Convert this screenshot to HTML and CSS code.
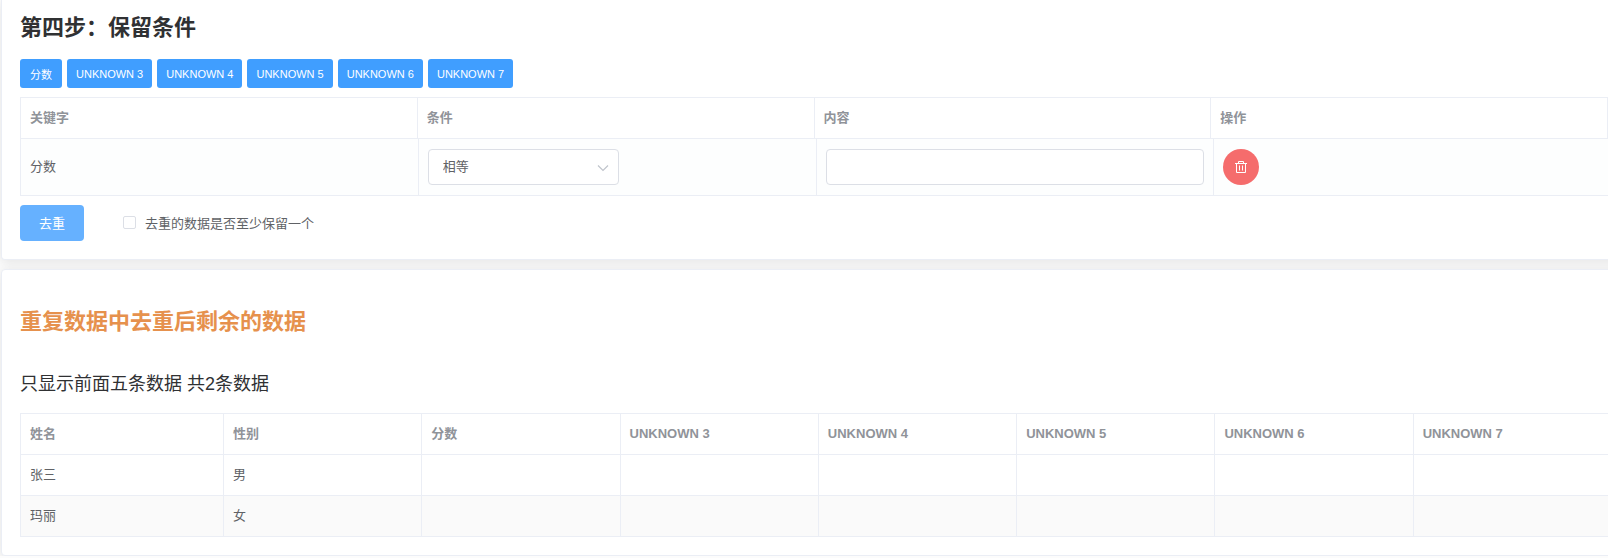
FILE: index.html
```html
<!DOCTYPE html>
<html lang="zh-CN">
<head>
  <meta charset="UTF-8">
  <meta name="viewport" content="width=device-width, initial-scale=1.0">
  <title>数据去重</title>
  <link rel="stylesheet" href="styles.css">
</head>
<body>
  <div class="page">
    <section class="card step-card">
      <h2>第四步：保留条件</h2>
      <div class="fields">
        <button type="button" class="btn-mini">分数</button>
        <button type="button" class="btn-mini">UNKNOWN 3</button>
        <button type="button" class="btn-mini">UNKNOWN 4</button>
        <button type="button" class="btn-mini">UNKNOWN 5</button>
        <button type="button" class="btn-mini">UNKNOWN 6</button>
        <button type="button" class="btn-mini">UNKNOWN 7</button>
      </div>

      <div class="table-wrap">
        <table class="table-head">
          <thead>
            <tr>
              <th>关键字</th>
              <th>条件</th>
              <th>内容</th>
              <th>操作</th>
            </tr>
          </thead>
        </table>
        <table class="table-body">
          <tbody>
            <tr>
              <td>分数</td>
              <td>
                <div class="select">
                  <select id="condition" aria-label="条件">
                    <option>相等</option>
                    <option>不相等</option>
                    <option>包含</option>
                  </select>
                  <svg class="arrow" viewBox="0 0 12 8" width="12" height="8">
                    <path d="M1 1.5 L6 6.5 L11 1.5" fill="none" stroke="#c0c4cc" stroke-width="1.2"/>
                  </svg>
                </div>
              </td>
              <td><input type="text" id="content" class="text-input" aria-label="内容"></td>
              <td>
                <button type="button" class="btn-delete" aria-label="删除">
                  <svg viewBox="0 0 14 14" width="14" height="14" fill="none" stroke="#fff">
                    <path d="M1 3.5 H13 M4.5 3 V1.5 H9.5 V3 M2.5 3.5 V12.5 H11.5 V3.5 M5.5 5.5 V10.5 M8.5 5.5 V10.5"/>
                  </svg>
                </button>
              </td>
            </tr>
          </tbody>
        </table>
      </div>

      <div class="actions">
        <button type="button" class="btn-primary">去重</button>
        <label class="checkbox" for="keepOne">
          <input type="checkbox" id="keepOne">
          去重的数据是否至少保留一个
        </label>
      </div>
    </section>

    <section class="card result-card">
      <h2 class="result-title">重复数据中去重后剩余的数据</h2>
      <p class="summary">只显示前面五条数据 共2条数据</p>
      <div class="table-wrap">
        <table class="result-table">
          <thead>
            <tr>
              <th class="col-name">姓名</th>
              <th>性别</th>
              <th>分数</th>
              <th>UNKNOWN 3</th>
              <th>UNKNOWN 4</th>
              <th>UNKNOWN 5</th>
              <th>UNKNOWN 6</th>
              <th>UNKNOWN 7</th>
            </tr>
          </thead>
          <tbody>
            <tr>
              <td>张三</td>
              <td>男</td>
              <td></td>
              <td></td>
              <td></td>
              <td></td>
              <td></td>
              <td></td>
            </tr>
            <tr>
              <td>玛丽</td>
              <td>女</td>
              <td></td>
              <td></td>
              <td></td>
              <td></td>
              <td></td>
              <td></td>
            </tr>
          </tbody>
        </table>
      </div>
    </section>
  </div>
</body>
</html>
```
FILE: styles.css
```css
* {
  box-sizing: border-box;
}
body {
  margin: 0;
  background-color: #fcfcfc;
  color: #303133;
  font-family: "Liberation Sans", "Noto Sans CJK SC", sans-serif;
  font-size: 13px;
  overflow: hidden;
}
button, input, select {
  font-family: inherit;
  font-size: 13px;
}
/* the cards run a little past the right edge of the window */
.page {
  display: flex;
  flex-direction: column;
  gap: 9px;
  margin-left: 1px;
  margin-right: -23px;
}
.card {
  background: #fff;
  border: 1px solid #ebeef5;
  border-radius: 4px;
  padding: 18px;
  box-shadow: 0 2px 12px rgba(0, 0, 0, 0.1);
}
.step-card {
  border-top: none;
  border-radius: 0 0 4px 4px;
  padding-top: 13px;
}
h2 {
  margin: 0 0 16px;
  font-size: 22px;
  line-height: 30px;
}
.fields {
  display: flex;
  gap: 5px;
  margin-bottom: 9px;
}
.btn-mini {
  min-width: 42px;
  height: 29px;
  padding: 0 9px;
  border: none;
  border-radius: 3px;
  background-color: #409eff;
  color: #fff;
  font-size: 11px;
  cursor: pointer;
}
.table-wrap {
  border-top: 1px solid #ebeef5;
  border-left: 1px solid #ebeef5;
}
table {
  width: 100%;
  table-layout: fixed;
  border-collapse: separate;
  border-spacing: 0;
}
.table-head {
  width: calc(100% - 4px);
}
th, td {
  height: 41px;
  padding: 0 9px;
  border-right: 1px solid #ebeef5;
  border-bottom: 1px solid #ebeef5;
  text-align: left;
  line-height: 20px;
}
th {
  color: #909399;
  font-weight: bold;
}
td {
  color: #606266;
}
.table-body td {
  height: 57px;
  background-color: #fdfefe;
}
.select {
  position: relative;
  width: 191px;
}
.select select {
  width: 100%;
  height: 36px;
  padding: 0 14px 2px;
  border: 1px solid #dcdfe6;
  border-radius: 4px;
  background: #fff;
  color: #606266;
  appearance: none;
}
.select .arrow {
  position: absolute;
  right: 10px;
  top: 15px;
  pointer-events: none;
}
.text-input {
  display: block;
  width: 100%;
  height: 36px;
  padding: 0 14px;
  border: 1px solid #dcdfe6;
  border-radius: 4px;
  background: #fff;
}
.btn-delete {
  display: flex;
  align-items: center;
  justify-content: center;
  width: 36px;
  height: 36px;
  padding: 0;
  border: none;
  border-radius: 50%;
  background-color: #f56c6c;
  cursor: pointer;
}
.actions {
  display: flex;
  align-items: center;
  gap: 39px;
  margin-top: 9px;
}
.btn-primary {
  height: 36px;
  padding: 0 19px 2px;
  border: none;
  border-radius: 4px;
  background-color: #66b1ff;
  color: #fff;
  cursor: pointer;
}
.checkbox {
  display: flex;
  align-items: center;
  gap: 9px;
  padding-bottom: 2px;
  color: #606266;
}
.checkbox input {
  width: 13px;
  height: 13px;
  margin: 0;
  border: 1px solid #dcdfe6;
  border-radius: 2px;
  background: #fff;
  appearance: none;
}
.checkbox input:checked {
  background: #409eff;
}
.result-card {
  padding-top: 37px;
}
.result-title {
  margin-bottom: 33px;
  color: #e6914d;
}
.summary {
  margin: 0 0 15px;
  font-size: 18px;
  line-height: 28px;
}
.result-table .col-name {
  width: 203px;
}
.result-table tbody tr:nth-child(even) td {
  background-color: #fafafa;
}
```
